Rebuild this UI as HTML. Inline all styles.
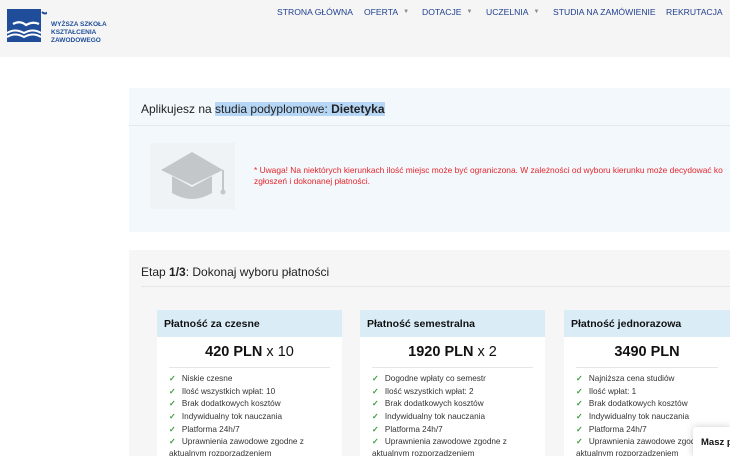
<!DOCTYPE html>
<html><head><meta charset="utf-8"><style>
*{margin:0;padding:0;box-sizing:border-box}
html,body{width:730px;height:456px;overflow:hidden}
body{background:#fff;font-family:"Liberation Sans",sans-serif;position:relative}
.hdr{position:absolute;left:0;top:0;width:730px;height:57px;background:#f5f5f5}
.nav{position:absolute;top:7px;font-size:8.6px;color:#1f3f8f;white-space:nowrap}
.nav span{position:absolute;top:0}
.car{font-size:6px;color:#888;margin-left:5px;vertical-align:2px;font-style:normal}
.p1{position:absolute;left:129px;top:88px;width:601px;height:144px;background:#f3f8fc}
.p2{position:absolute;left:129px;top:250px;width:601px;height:206px;background:#f6f6f6}
.card{position:absolute;top:310px;width:185px;height:146px;background:#fff}
.ch{height:27px;background:#daedf7;font-weight:bold;font-size:10.5px;color:#111;padding:8px 0 0 7px}
.pr{text-align:center;font-size:14.5px;color:#111;margin-top:7px}
.ln{height:1px;background:#e6e6e6;margin:7px 12px 0}
ul{list-style:none;margin:5px 0 0 12px;font-size:8.2px;color:#333}
li{height:12.7px;line-height:12.7px}
li:before{content:"✓";color:#3a9a3a;margin-right:6px;font-weight:bold}
li.w{line-height:12px}
</style></head><body>
<div class="hdr">
<svg style="position:absolute;left:7px;top:9px" width="40" height="34" viewBox="0 0 40 34">
<rect x="0" y="0" width="34" height="33" fill="#1f4d9a"/>
<path d="M35 3 q3 3 6 0" stroke="#1f4d9a" stroke-width="2" fill="none"/>
<path d="M6 15 q7 -4 13 1 q7 -4 13 -1" stroke="#fff" stroke-width="2.2" fill="none"/>
<path d="M0 24 q8 -5 17 0 q9 -5 17 0" stroke="#fff" stroke-width="2" fill="none"/>
<path d="M0 28 q8 -5 17 0 q9 -5 17 0" stroke="#fff" stroke-width="2" fill="none"/>
</svg>
<div style="position:absolute;left:51px;top:21px;font-size:6.5px;font-weight:bold;color:#1f4d9a;line-height:8px">WYŻSZA SZKOŁA<br>KSZTAŁCENIA<br>ZAWODOWEGO</div>
<div class="nav" style="left:0;width:730px">
<span style="left:277px">STRONA GŁÓWNA</span>
<span style="left:364px">OFERTA<i class="car">▼</i></span>
<span style="left:422px">DOTACJE<i class="car">▼</i></span>
<span style="left:486px">UCZELNIA<i class="car">▼</i></span>
<span style="left:553px">STUDIA NA ZAMÓWIENIE</span>
<span style="left:666px">REKRUTACJA</span>
</div>
</div>
<div class="p1">
<div style="position:absolute;left:12px;top:14px;font-size:12px;color:#222">Aplikujesz na <span style="background:#b6d6f6">studia podyplomowe: <b>Dietetyka</b></span></div>
<div style="position:absolute;left:0;top:37px;width:601px;height:1px;background:#e3e8ec"></div>
<div style="position:absolute;left:21px;top:55px;width:85px;height:66px;background:#f0f3f5">
<svg width="85" height="66" viewBox="0 0 85 66"><path d="M42 9 L73 27 L42 42 L11 27Z" fill="#c4c7c9"/><path d="M22 33 L22 50 q20 12 40 0 L62 33 L42 44Z" fill="#c4c7c9"/><rect x="72" y="27" width="2" height="20" fill="#c4c7c9"/><circle cx="73" cy="49" r="2.5" fill="#c4c7c9"/></svg></div>
<div style="position:absolute;left:125px;top:77px;font-size:8.4px;color:#e3262b;line-height:11px;white-space:nowrap">* Uwaga! Na niektórych kierunkach ilość miejsc może być ograniczona. W zależności od wyboru kierunku może decydować ko<br>zgłoszeń i dokonanej płatności.</div>
</div>
<div class="p2">
<div style="position:absolute;left:12px;top:15px;font-size:12px;color:#222">Etap <b>1/3</b>: Dokonaj wyboru płatności</div>
<div style="position:absolute;left:12px;top:36px;width:589px;height:1px;background:#e6e6e6"></div>
</div>
<div class="card" style="left:157px"><div class="ch">Płatność za czesne</div><div class="pr"><b>420 PLN</b> x 10</div><div class="ln"></div>
<ul><li>Niskie czesne</li><li>Ilość wszystkich wpłat: 10</li><li>Brak dodatkowych kosztów</li><li>Indywidualny tok nauczania</li><li>Platforma 24h/7</li><li class="w">Uprawnienia zawodowe zgodne z</li></ul><div style="font-size:8.2px;color:#333;margin-left:12px">aktualnym rozporządzeniem</div></div>
<div class="card" style="left:360px"><div class="ch">Płatność semestralna</div><div class="pr"><b>1920 PLN</b> x 2</div><div class="ln"></div>
<ul><li>Dogodne wpłaty co semestr</li><li>Ilość wszystkich wpłat: 2</li><li>Brak dodatkowych kosztów</li><li>Indywidualny tok nauczania</li><li>Platforma 24h/7</li><li class="w">Uprawnienia zawodowe zgodne z</li></ul><div style="font-size:8.2px;color:#333;margin-left:12px">aktualnym rozporządzeniem</div></div>
<div class="card" style="left:564px;width:166px"><div class="ch">Płatność jednorazowa</div><div class="pr"><b>3490 PLN</b></div><div class="ln"></div>
<ul><li>Najniższa cena studiów</li><li>Ilość wpłat: 1</li><li>Brak dodatkowych kosztów</li><li>Indywidualny tok nauczania</li><li>Platforma 24h/7</li><li class="w" style="white-space:nowrap">Uprawnienia zawodowe zgodne z</li></ul><div style="font-size:8.2px;color:#333;margin-left:12px">aktualnym rozporządzeniem</div></div>
<div style="position:absolute;left:693px;top:427px;width:37px;height:29px;background:#fff;box-shadow:0 0 8px rgba(0,0,0,.2);border-radius:3px 0 0 0;font-weight:bold;font-size:9.5px;color:#111;padding:10px 0 0 8px;white-space:nowrap;overflow:hidden">Masz p</div>
</body></html>
